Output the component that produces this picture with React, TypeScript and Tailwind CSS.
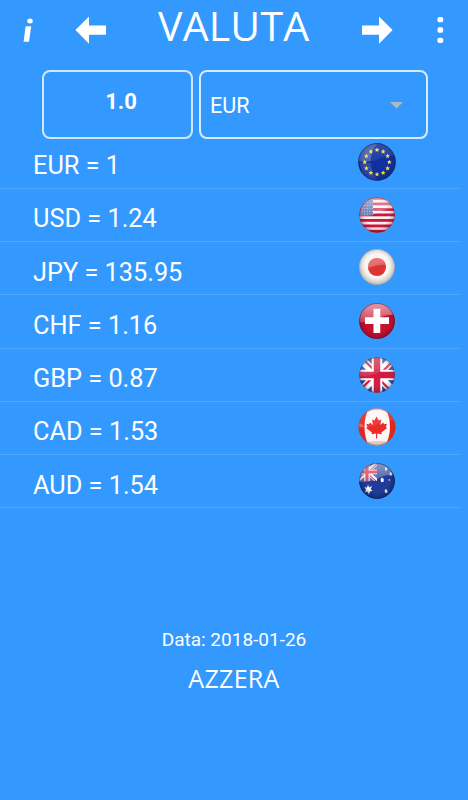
import type { ReactNode } from "react"

type Rate = { code: string; value: string; flag: ReactNode }

const rates: Rate[] = [
  { code: "EUR", value: "1", flag: <EuropeFlag /> },
  { code: "USD", value: "1.24", flag: <UsaFlag /> },
  { code: "JPY", value: "135.95", flag: <JapanFlag /> },
  { code: "CHF", value: "1.16", flag: <SwissFlag /> },
  { code: "GBP", value: "0.87", flag: <BritainFlag /> },
  { code: "CAD", value: "1.53", flag: <CanadaFlag /> },
  { code: "AUD", value: "1.54", flag: <AustraliaFlag /> },
]

export default function App() {
  return (
    <div className="flex h-[800px] w-[468px] flex-col overflow-hidden bg-[#3399ff] font-['Roboto',sans-serif] text-white">
      <Header />

      {/* Amount and currency */}
      <div className="flex h-[69px] shrink-0 gap-[6px] pl-[42px]">
        <div className="flex w-[151px] justify-center rounded-[8px] border-2 border-[#d0e7ff] pt-[14px] pl-[7px] text-[22px] leading-8 font-bold">
          1.0
        </div>
        <button
          type="button"
          className="flex w-[229px] items-center justify-between rounded-[8px] border-2 border-[#d9ecff] pt-[3px] pr-[23px] pl-[9px] text-[21.5px]"
        >
          <span>EUR</span>
          <svg className="h-[7px] w-[13px] -translate-y-px" viewBox="0 0 13 7" aria-hidden="true">
            <path d="M0 0H13L6.5 6.5Z" fill="#adbabf" />
          </svg>
        </button>
      </div>

      {/* Rates */}
      <ul className="-mt-[3.5px] w-[459px] shrink-0">
        {rates.map((rate) => (
          <li
            key={rate.code}
            className="flex h-[53.25px] items-center justify-between border-b border-[#52a8ff] pr-[62px] pl-[33px]"
          >
            <span className="pt-[9px] text-[25.3px] leading-8">
              {rate.code} = {rate.value}
            </span>
            {rate.flag}
          </li>
        ))}
      </ul>

      {/* Footer */}
      <div className="mt-[117.5px] flex flex-col items-center">
        <p className="text-[19px] leading-7">Data: 2018-01-26</p>
        <button
          type="button"
          className="mt-[8px] font-['Open_Sans','Noto_Sans',sans-serif] text-[25px] leading-8 tracking-[0.3px]"
        >
          AZZERA
        </button>
      </div>
    </div>
  )
}

function Header() {
  return (
    <header className="flex h-[70px] shrink-0 items-start">
      <svg className="mt-[17px] ml-[22px] h-[26px] w-[12px]" viewBox="0 0 12 26" fill="#fff" aria-hidden="true">
        <ellipse cx="8" cy="4" rx="2.8" ry="2.5" />
        <path d="M3.6 9.3H9.2L7 24.7H1.6Z" />
      </svg>
      <svg className="mt-[16px] ml-[41px] h-[28px] w-[31px]" viewBox="0 0 31 28" fill="#fff" aria-hidden="true">
        <path d="M.4 14L14 .4V9.6H31V18.8H14V27.8Z" />
      </svg>
      <h1 className="ml-[52px] w-[152px] font-['Open_Sans','Noto_Sans',sans-serif] text-[41px] leading-[50px] font-normal tracking-[0.2px] whitespace-nowrap">
        VALUTA
      </h1>
      <svg className="mt-[16px] ml-[52px] h-[28px] w-[31px]" viewBox="0 0 31 28" fill="#fff" aria-hidden="true">
        <path d="M30.6 14L17 .4V9.6H0V18.8H17V27.8Z" />
      </svg>
      <svg className="mt-[16px] ml-[44px] h-[28px] w-[7px]" viewBox="0 0 7 28" fill="#fff" aria-hidden="true">
        <rect x=".5" y=".9" width="5.7" height="5.4" rx="1.8" />
        <rect x=".5" y="11.3" width="5.7" height="5.4" rx="1.8" />
        <rect x=".5" y="21.7" width="5.7" height="5.4" rx="1.8" />
      </svg>
    </header>
  )
}

// Round glass badge, 40x40 with the ball centred at 20,20
function Ball({ id, rim, radius = 17.8, gloss = 0.45, shade = 0.4, className, children }: {
  id: string
  rim: string
  radius?: number
  gloss?: number
  shade?: number
  className: string
  children: ReactNode
}) {
  return (
    <svg className={className} viewBox="0 0 40 40" aria-hidden="true">
      <defs>
        <clipPath id={`${id}-clip`}>
          <circle cx="20" cy="20" r={radius} />
        </clipPath>
        <linearGradient id={`${id}-gloss`} x1="0" y1="0" x2="0" y2="1">
          <stop offset="0" stopColor="#fff" stopOpacity={gloss} />
          <stop offset="1" stopColor="#fff" stopOpacity={gloss / 3} />
        </linearGradient>
        <radialGradient id={`${id}-shade`} cx=".5" cy=".47" r=".53">
          <stop offset=".65" stopColor={rim} stopOpacity="0" />
          <stop offset="1" stopColor={rim} stopOpacity={shade} />
        </radialGradient>
      </defs>
      <g clipPath={`url(#${id}-clip)`}>
        {children}
        <circle cx="20" cy="20" r={radius} fill={`url(#${id}-shade)`} />
        <path d="M2 2H38V14Q30 13 20 18Q10 22 2 21Z" fill={`url(#${id}-gloss)`} />
      </g>
      <circle cx="20" cy="20" r={radius - 0.3} fill="none" stroke={rim} strokeWidth=".8" opacity=".6" />
    </svg>
  )
}

const euStars = Array.from({ length: 12 }, (_, i) => i * 30)

function EuropeFlag() {
  return (
    <Ball id="eu" rim="#102158" radius={18.7} gloss={0.15} className="h-[40px] w-[40px]">
      <rect width="40" height="40" fill="#102fa0" />
      <path d="M0 0H22Q13 9 14 20H0Z" fill="#687bc5" opacity=".6" />
      <path d="M2 20H14Q14 31 21 39H8Z" fill="#6b82c5" opacity=".35" />
      <path d="M2 20H15" stroke="#0a247f" strokeWidth="1.5" />
      {euStars.map((angle) => (
        <path
          key={angle}
          d="M20 5.4L20.7 7L22.4 7.1L21.1 8.2L21.5 10L20 9L18.5 10L18.9 8.2L17.6 7.1L19.3 7Z"
          transform={`rotate(${angle} 20 20) rotate(${-angle} 20 7.7)`}
          fill="#f5e533"
        />
      ))}
    </Ball>
  )
}

const stripes = [0, 1, 2, 3, 4, 5, 6]
const cantonDots = [0, 1, 2, 3, 4, 5]

function UsaFlag() {
  return (
    <Ball id="us" rim="#650b22" gloss={0.55} className="h-[40px] w-[40px]">
      <rect width="40" height="40" fill="#f7f3f5" />
      {stripes.map((i) => (
        <rect key={i} y={2 + i * 5.5} width="40" height="2.8" fill="#cc1738" />
      ))}
      <rect width="16" height="21" fill="#4a5fa5" />
      {cantonDots.map((row) =>
        cantonDots.map((col) => (
          <circle key={`${row}-${col}`} cx={2.5 + col * 2.6} cy={5 + row * 2.8} r=".5" fill="#c4cdec" />
        ))
      )}
    </Ball>
  )
}

function JapanFlag() {
  return (
    <Ball id="jp" rim="#85817a" gloss={0.15} shade={0.5} className="h-[40px] w-[40px] -translate-y-px">
      <rect width="40" height="40" fill="#f7f5f2" />
      <circle cx="20" cy="20" r="9.1" fill="#da3437" />
      <path d="M11 20A9.1 9.1 0 0 1 29 18Q22 17 11 21Z" fill="#ec8380" opacity=".6" />
    </Ball>
  )
}

function SwissFlag() {
  return (
    <Ball id="ch" rim="#65051b" gloss={0.6} shade={0.5} className="h-[40px] w-[40px]">
      <rect width="40" height="40" fill="#c6122f" />
      <path d="M16.5 7.7H23.3V16.2H32V23H23.3V32H16.5V23H8V16.2H16.5Z" fill="#fff" />
    </Ball>
  )
}

function UnionJack() {
  return (
    <>
      <rect width="40" height="40" fill="#27489a" />
      <path d="M0 0L40 40M40 0L0 40" stroke="#fff" strokeWidth="8" />
      <path d="M1 -1L20 18M41 1L22 20M0 38L18 20M20 22L39 41" stroke="#d22446" strokeWidth="2.4" />
      <path d="M20 0V40M0 20H40" stroke="#fff" strokeWidth="10.5" />
      <path d="M20 0V40M0 20H40" stroke="#d21d40" strokeWidth="6.5" />
    </>
  )
}

function BritainFlag() {
  return (
    <Ball id="gb" rim="#28294f" gloss={0.3} shade={0.3} className="h-[40px] w-[40px]">
      <UnionJack />
    </Ball>
  )
}

function CanadaFlag() {
  return (
    <Ball id="ca" rim="#b43b33" radius={18.4} gloss={0.15} shade={0.1} className="h-[40px] w-[40px] -translate-y-px">
      <rect width="40" height="40" fill="#e7231d" />
      <path d="M12 0Q3 20 12 40H28Q38 20 28 0Z" fill="#fbf9f6" />
      <path d="M11 35Q20 33 30 35L28 40H12Z" fill="#c7beb0" opacity=".6" />
      <path d="M2 16Q6 17 7 20H2Z" fill="#fff" opacity=".25" />
      <path
        d="M19.6 9.5L21.8 13.4L24.2 12.4L23.3 18L26.2 15.4L27 17.2L30 16.8L28.8 20L30.2 21L24.2 25.5L24.9 27.2L20.2 26.5V31.5H19V26.5L14.3 27.2L15 25.5L9 21L10.4 20L9.3 16.8L12.2 17.2L13 15.4L15.9 18L15 12.4L17.4 13.4Z"
        fill="#ed2929"
      />
    </Ball>
  )
}

function AustraliaFlag() {
  return (
    <Ball id="au" rim="#081746" gloss={0.5} shade={0.5} className="h-[40px] w-[40px]">
      <rect width="40" height="40" fill="#1f3d98" />
      <svg x="0" y="2" width="20" height="18" viewBox="0 0 40 40" preserveAspectRatio="none">
        <UnionJack />
      </svg>
      <path d="M11 23.5L12 26.5L15 25L13.6 28L15.5 30L13 30.2L12 33.5L10.5 30.5L7.8 31.5L9 28.8L7.5 26L10 26.7Z" fill="#fff" />
      <g fill="#f5f7ff">
        <path d="M25 16.5L26.8 18L26.5 21H24L23.6 18Z" />
        <path d="M29 28L30.8 30L30 32H28L27.7 29Z" />
        <path d="M28 6L30.5 7L29.5 9.5H28Z" />
        <path d="M33 11L35 12L34.5 15L32.5 14Z" />
        <circle cx="32.3" cy="19" r=".8" />
      </g>
    </Ball>
  )
}
